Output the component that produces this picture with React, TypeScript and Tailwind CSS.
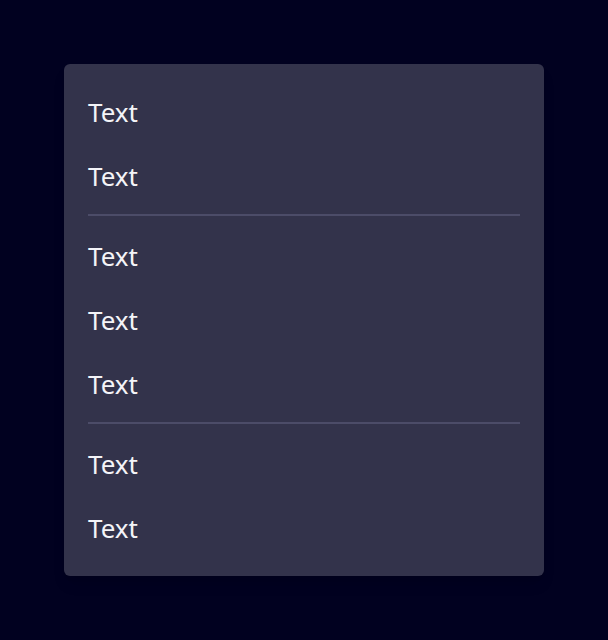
import React from "react";

const Row = ({ children }: { children: React.ReactNode }) => (
  <div className="h-16 flex items-center px-6 text-[26px] text-[#f4f4f8]" style={{}}>
    {children}
  </div>
);

const Divider = () => (
  <div className="h-4 px-6 pt-[6px]">
    <div className="h-[2px] bg-[#4c4c68]" />
  </div>
);

export default function App() {
  return (
    <div className="min-h-[640px] w-[608px] bg-[#010120] p-16" style={{ fontFamily: '"Noto Sans", sans-serif' }}>
      <div className="w-[480px] rounded-md bg-[#33334b] py-4 shadow-lg">
        <Row>Text</Row>
        <Row>Text</Row>
        <Divider />
        <Row>Text</Row>
        <Row>Text</Row>
        <Row>Text</Row>
        <Divider />
        <Row>Text</Row>
        <Row>Text</Row>
      </div>
    </div>
  );
}
